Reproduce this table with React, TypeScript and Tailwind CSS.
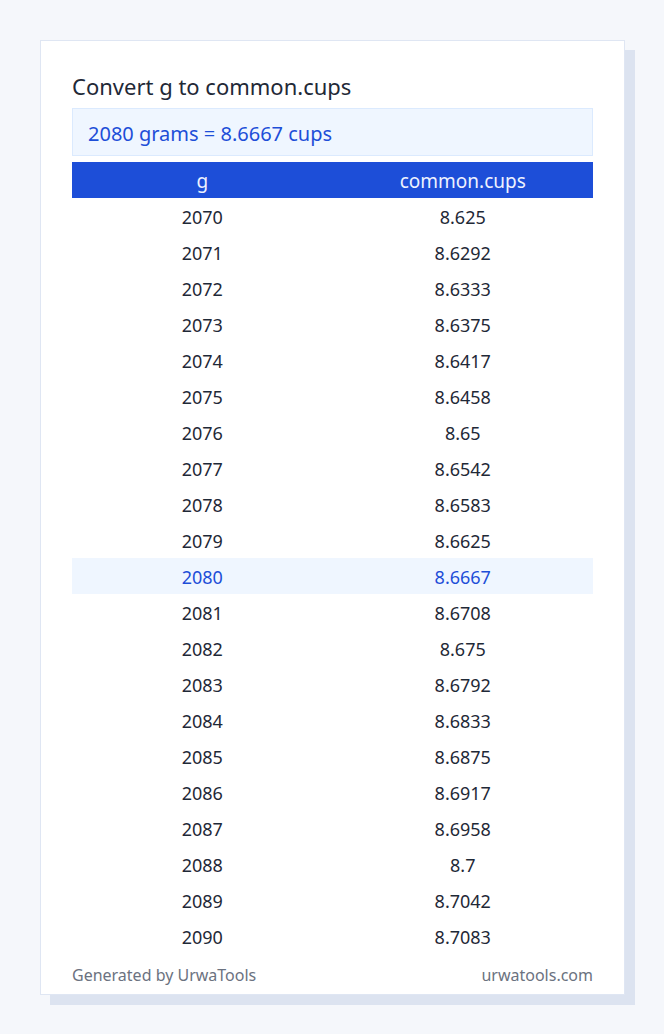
import React from 'react';

const rows: [number, string][] = [
  [2070, '8.625'],
  [2071, '8.6292'],
  [2072, '8.6333'],
  [2073, '8.6375'],
  [2074, '8.6417'],
  [2075, '8.6458'],
  [2076, '8.65'],
  [2077, '8.6542'],
  [2078, '8.6583'],
  [2079, '8.6625'],
  [2080, '8.6667'],
  [2081, '8.6708'],
  [2082, '8.675'],
  [2083, '8.6792'],
  [2084, '8.6833'],
  [2085, '8.6875'],
  [2086, '8.6917'],
  [2087, '8.6958'],
  [2088, '8.7'],
  [2089, '8.7042'],
  [2090, '8.7083'],
];

export default function App() {
  return (
    <div
      className="min-h-[1034px] w-[664px] bg-[#f5f7fb] pt-10 pl-10"
      style={{ fontFamily: '"Noto Sans", "Open Sans", sans-serif' }}
    >
      <div className="relative w-[585px]">
        {/* offset shadow block */}
        <div className="absolute left-[10px] top-[10px] h-full w-full bg-[#dce3f0]" />

        <div className="relative border border-[#dfe6f3] bg-white px-[31px] pt-[31px] pb-[8px]">
          <h1 className="text-[22px] leading-[29px] text-[#1f2937]">Convert g to common.cups</h1>

          <div className="mt-[7px] border border-[#dbeafe] bg-[#eff6ff] px-[15px] pt-[11px] pb-[7px] text-[20px] leading-[28px] text-[#1d4ed8]">
            2080 grams = 8.6667 cups
          </div>

          <table className="mt-[6px] w-full border-collapse text-[18px]">
            <thead>
              <tr className="bg-[#1d4ed8] text-[19px] text-[#eef2ff]">
                <th className="h-9 w-1/2 p-0 pt-[2px] text-center font-normal">g</th>
                <th className="h-9 w-1/2 p-0 pt-[2px] text-center font-normal">common.cups</th>
              </tr>
            </thead>
            <tbody>
              {rows.map(([g, c]) => {
                const active = g === 2080;
                return (
                  <tr key={g} className={active ? 'bg-[#eff6ff] text-[#1d4ed8]' : 'text-[#1f2937]'}>
                    <td className="h-9 p-0 pt-[2px] text-center">{g}</td>
                    <td className="h-9 p-0 pt-[2px] text-center">{c}</td>
                  </tr>
                );
              })}
            </tbody>
          </table>

          <div className="mt-[11px] flex justify-between text-[16px] leading-[21px] text-[#6b7280]">
            <span>Generated by UrwaTools</span>
            <span>urwatools.com</span>
          </div>
        </div>
      </div>
    </div>
  );
}
